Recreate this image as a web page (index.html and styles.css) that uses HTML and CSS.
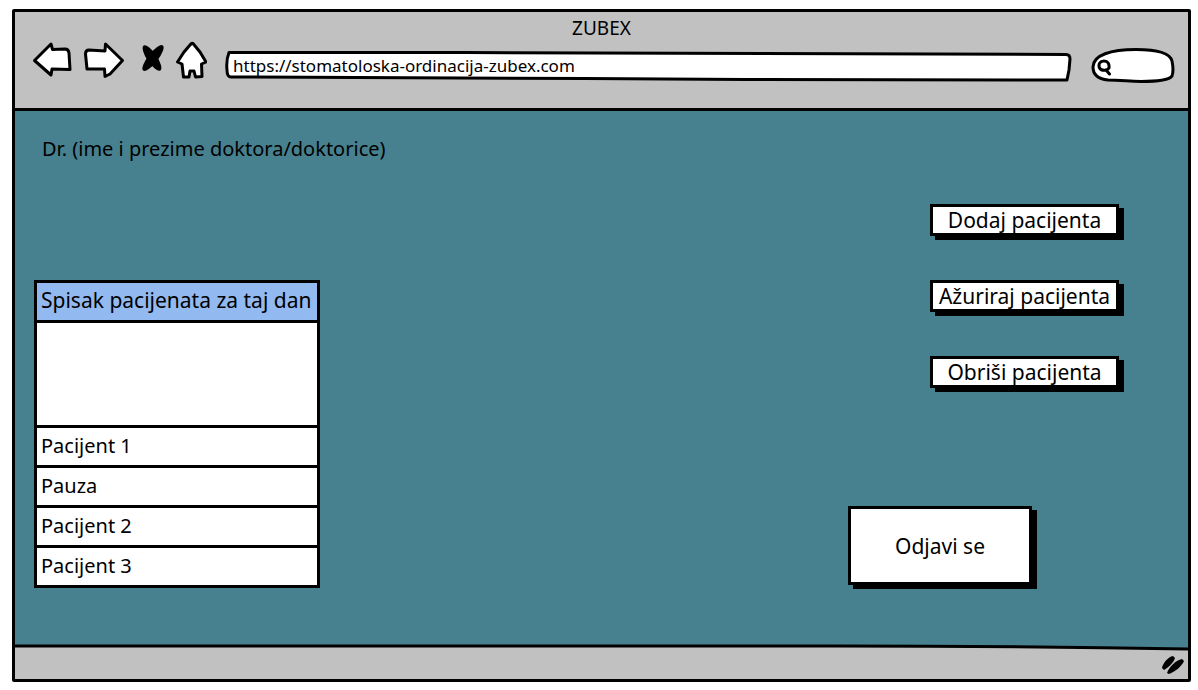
FILE: index.html
```html
<!DOCTYPE html>
<html lang="bs">
<head>
  <meta charset="utf-8">
  <meta name="viewport" content="width=device-width, initial-scale=1">
  <title>ZUBEX</title>
  <link rel="stylesheet" href="styles.css">
</head>
<body>
  <div class="window">
    <header class="chrome">
      <div class="chrome-title">ZUBEX</div>
      <nav class="toolbar" aria-label="Navigacija">
        <button class="icon-button" type="button" aria-label="Nazad">
          <svg class="icon" width="40" height="38" viewBox="0 0 40 38">
            <path d="M2.5 19.500 L19 3 L20.500 8.500 L33 8 Q36.500 8 37 12 L38 28.500 L20 28 L19 34 Z"/>
          </svg>
        </button>
        <button class="icon-button" type="button" aria-label="Naprijed">
          <svg class="icon" width="42" height="38" viewBox="0 0 42 38">
            <path d="M39.500 19.500 L22.500 3 L22 10 L6 9 Q2.500 9 2.500 13 L4 28 L21.500 28 L22 35.500 L27 33 Z"/>
          </svg>
        </button>
        <button class="icon-button" type="button" aria-label="Zaustavi">
          <svg class="icon-solid" width="28" height="38" viewBox="0 0 28 38">
            <ellipse cx="17" cy="17" rx="16" ry="5" transform="rotate(-52 17 17)"/>
            <ellipse cx="16" cy="17" rx="15" ry="5" transform="rotate(56 16 17)"/>
          </svg>
        </button>
        <button class="icon-button" type="button" aria-label="Početna">
          <svg class="icon" width="32" height="38" viewBox="0 0 32 38">
            <path d="M18 2.500 Q17 1.500 15 4 L9 11 L2.500 21 L7 23 L8.500 36 L14 36 L15 30 L19 30 L20.500 36 L27 35.500 L26.500 23 L31 21 L25 11 Z"/>
          </svg>
        </button>
        <div class="address">
          <svg class="outline" viewBox="0 0 845 32" preserveAspectRatio="none" aria-hidden="true">
            <path d="M4 2.500 L240 2.500 L840 4.500 Q844 4.500 844 9 L843 20 L841 30 L520 29.500 L360 28.500 L6 27 Q2 27 2 20 Q1 10 4 2.500 Z"/>
          </svg>
          <input class="address-input" type="text" aria-label="Adresa" value="https://stomatoloska-ordinacija-zubex.com">
        </div>
        <div class="search">
          <svg class="outline" viewBox="0 0 84 36" preserveAspectRatio="none" aria-hidden="true">
            <path d="M2 19 C2 7 20 1.500 45 1.500 C66 1.500 79 5 81 13 C82 18 82.500 24 81 28 C78 32 64 33.500 50 33.500 C36 33 28 32 17 32 C7 31 2 26 2 19 Z"/>
          </svg>
          <svg class="search-icon" width="16" height="18" viewBox="0 0 16 18" aria-hidden="true">
            <path d="M7 2 C11 2 12.500 5 12 9 C10 12 4 12 2.500 9 C1 5 3 2 7 2 Z M9 11 L12.500 15"/>
          </svg>
          <input class="search-input" type="search" aria-label="Pretraga">
        </div>
      </nav>
    </header>

    <main class="page">
      <section class="schedule">
        <h1 class="doctor">Dr. (ime i prezime doktora/doktorice)</h1>
        <table class="patients">
          <thead>
            <tr><th scope="col">Spisak pacijenata za taj dan</th></tr>
          </thead>
          <tbody>
            <tr class="blank"><td></td></tr>
            <tr><td>Pacijent 1</td></tr>
            <tr><td>Pauza</td></tr>
            <tr><td>Pacijent 2</td></tr>
            <tr><td>Pacijent 3</td></tr>
          </tbody>
        </table>
      </section>
      <section class="actions">
        <button class="button" type="button">Dodaj pacijenta</button>
        <button class="button" type="button">Ažuriraj pacijenta</button>
        <button class="button" type="button">Obriši pacijenta</button>
        <button class="button button-large" type="button">Odjavi se</button>
      </section>
    </main>

    <footer class="status">
      <svg class="status-edge" viewBox="0 0 1172 8" preserveAspectRatio="none" aria-hidden="true">
        <path class="status-fill" d="M0 2 L820 2 Q1000 2 1172 5 L1172 8 L0 8 Z"/>
        <path class="status-line" d="M0 2 L820 2 Q1000 2 1172 5"/>
      </svg>
      <svg class="grip" width="24" height="20" viewBox="0 0 24 20" aria-hidden="true">
        <path d="M1 13 C2 8 7 2 12 1 L14 3 C13 7 8 12 3 15 Z M6 18 C8 12 15 5 21 4 L23 6 C21 11 14 17 8 19 Z"/>
      </svg>
    </footer>
  </div>
</body>
</html>
```

FILE: styles.css
```css
* {
  box-sizing: border-box;
}

body {
  display: flex;
  min-height: 100vh;
  margin: 0;
  padding: 9px 7px 8px 12px;
  background: #fff;
  color: #000;
  font-family: "Noto Sans", sans-serif;
  font-size: 20px;
  line-height: 24px;
}

button,
input {
  margin: 0;
  padding: 0;
  border: 0;
  color: inherit;
  font: inherit;
}

.window {
  display: flex;
  flex: 1;
  flex-direction: column;
  border: 3px solid #000;
  border-radius: 2px;
  background: #c1c1c1;
}

.chrome {
  padding: 4px 13px 24px 17px;
  border-bottom: 3px solid #000;
}

.chrome-title {
  margin-right: 4px;
  font-size: 19px;
  text-align: center;
}

.toolbar {
  display: flex;
  align-items: flex-start;
  gap: 11px;
  padding-top: 1px;
}

.icon-button {
  display: block;
  background: none;
}

.icon,
.icon-solid {
  display: block;
}

.icon {
  fill: #fff;
  stroke: #000;
  stroke-width: 3px;
  stroke-linejoin: round;
}

.icon-solid {
  fill: #000;
}

.address,
.search {
  position: relative;
  display: flex;
}

.address {
  flex: 1;
  height: 32px;
  margin: 9px 9px 0 7px;
}

.search {
  width: 84px;
  height: 36px;
  margin-top: 7px;
}

.outline {
  position: absolute;
  inset: 0;
  width: 100%;
  height: 100%;
  overflow: visible;
  fill: #fff;
  stroke: #000;
  stroke-width: 3px;
  stroke-linejoin: round;
}

.address-input,
.search-input {
  position: relative;
  flex: 1;
  min-width: 0;
  background: transparent;
  outline: none;
}

.address-input {
  height: 24px;
  margin-top: 4px;
  padding: 0 8px;
  font-size: 17px;
}

.search-icon {
  position: relative;
  margin: 11px 0 0 6px;
  fill: none;
  stroke: #000;
  stroke-width: 3px;
  stroke-linecap: round;
}

.search-input {
  margin: 6px 10px 6px 4px;
  font-size: 17px;
}

.page {
  display: flex;
  flex: 1;
  justify-content: space-between;
  padding: 26px 69px 54px 19px;
  background: #47818f;
}

.doctor {
  margin: 0 0 119px 8px;
  font-size: 20px;
  font-weight: 400;
  line-height: 24px;
}

.patients {
  width: 286px;
  border-collapse: collapse;
}

.patients th,
.patients td {
  height: 40px;
  padding: 0 4px 1px;
  border: 3px solid #000;
  background: #fff;
  font-weight: 400;
  text-align: left;
  white-space: nowrap;
}

.patients th {
  padding-bottom: 4px;
  background: #93b9f1;
  font-size: 21px;
}

.patients .blank td {
  height: 105px;
}

.actions {
  display: flex;
  flex-direction: column;
  align-items: flex-end;
  width: 271px;
  padding-top: 67px;
}

.button {
  width: 189px;
  height: 32px;
  margin-bottom: 44px;
  border: 3px solid #000;
  background: #fff;
  box-shadow: 5px 4px 0 #000;
  font-size: 21px;
  white-space: nowrap;
}

.button-large {
  align-self: flex-start;
  width: 184px;
  height: 79px;
  margin: 74px 0 0;
}

.status {
  position: relative;
  display: flex;
  justify-content: flex-end;
  height: 35px;
  padding: 11px 3px 0 0;
}

.status-edge {
  position: absolute;
  top: 0;
  left: 0;
  width: 100%;
  height: 8px;
  background: #47818f;
}

.status-fill {
  fill: #c1c1c1;
}

.status-line {
  fill: none;
  stroke: #000;
  stroke-width: 3px;
}

.grip {
  position: relative;
}
```
